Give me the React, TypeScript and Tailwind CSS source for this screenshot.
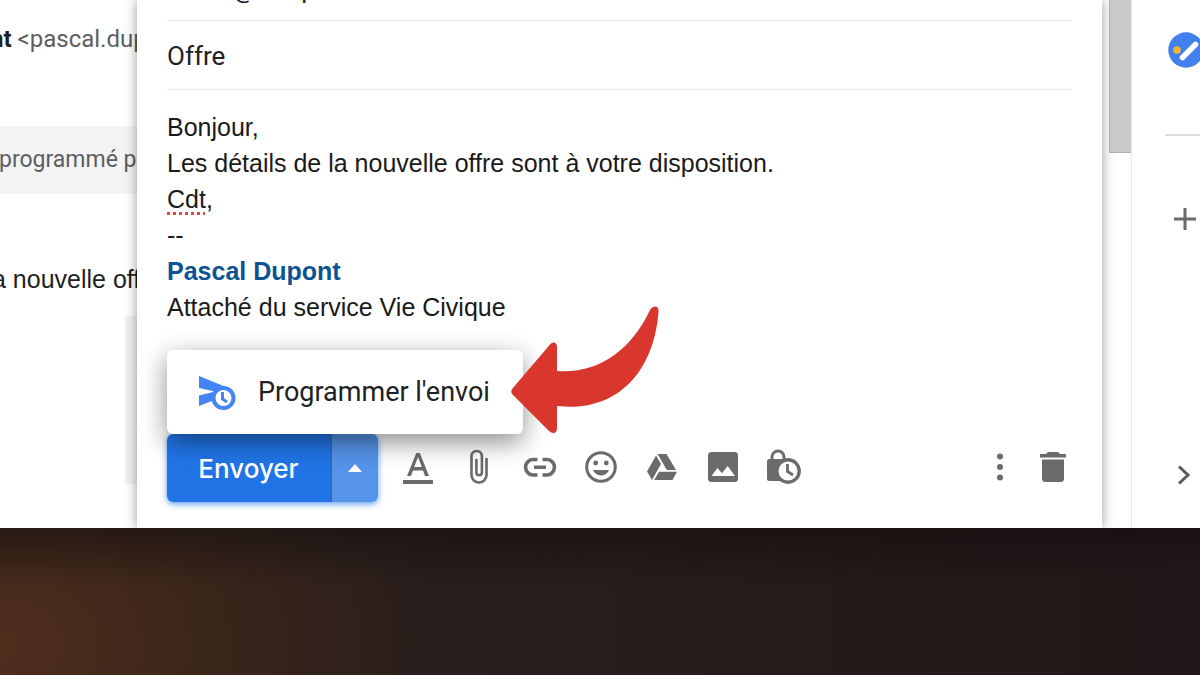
import { useState } from "react";
import type { ReactNode } from "react";

const ROBOTO = "font-['Roboto','Liberation_Sans',sans-serif]";

const ScheduleSendIcon = () => (
    <svg width="38" height="36" viewBox="0 0 38 36" fill="none" aria-hidden="true">
        <path d="M1 2L28 13L22 16L17 21L14 27L1 32V21.500L17 17.500L1 14Z" fill="#4285f4" />
        <circle cx="25.5" cy="24" r="10" fill="white" stroke="#4285f4" strokeWidth="4" />
        <path d="M24.5 18V25L29 28" stroke="#4285f4" strokeWidth="3" />
    </svg>
);

const FormatIcon = () => (
    <svg width="32" height="36" viewBox="0 0 32 36" fill="#6b6b6b" aria-hidden="true">
        <path d="M5 27L14.2 4H17.8L27 27H23L21 21.5H11L9 27ZM12.2 18H19.8L16 8Z" />
        <path d="M1 31H31V35H1Z" />
    </svg>
);

const AttachIcon = () => (
    <svg width="20" height="36" viewBox="0 0 20 36" fill="none" stroke="#6b6b6b" strokeWidth="2.6" aria-hidden="true">
        <path d="M17.5 9V26A7.5 7.5 0 0 1 2.5 26V7.200A5.200 5.200 0 0 1 12.9 7.200V23.5A2.75 2.75 0 0 1 7.4 23.5V10" />
    </svg>
);

const LinkIcon = () => (
    <svg width="36" height="36" viewBox="0 0 36 36" fill="none" stroke="#6b6b6b" strokeWidth="3.6" aria-hidden="true">
        <path d="M15.500 10.5H10.5A7.8 7.8 0 0 0 10.5 26H15.500M20.500 10.5H25.5A7.8 7.8 0 0 1 25.5 26H20.500M12 18.2H24" />
    </svg>
);

const EmojiIcon = () => (
    <svg width="34" height="36" viewBox="0 0 34 36" fill="#6b6b6b" aria-hidden="true">
        <circle cx="17" cy="18" r="14.3" fill="none" stroke="#6b6b6b" strokeWidth="3" />
        <circle cx="11.7" cy="14" r="2.4" />
        <circle cx="22.3" cy="14" r="2.4" />
        <path d="M9 21H25A8.6 8.6 0 0 1 9 21Z" />
    </svg>
);

const DriveIcon = () => (
    <svg width="32" height="36" viewBox="0 0 32 36" fill="#6b6b6b" aria-hidden="true">
        <path d="M10 6.5L15 15L6 31L1 22.5Z" />
        <path d="M11.5 5H20.5L30 21H20.8Z" />
        <path d="M13 22.8H31L26.5 31H8.2Z" />
    </svg>
);

const PhotoIcon = () => (
    <svg width="32" height="36" viewBox="0 0 32 36" aria-hidden="true">
        <rect x="1" y="3" width="30" height="30" rx="3.5" fill="#6b6b6b" />
        <path d="M4.5 27L10.5 19L15 24.3L20.7 17L28 27Z" fill="white" />
    </svg>
);

const ConfidentialIcon = () => (
    <svg width="36" height="36" viewBox="0 0 36 36" aria-hidden="true">
        <path d="M6 12V8A6 6 0 0 1 18 8V12" fill="none" stroke="#6b6b6b" strokeWidth="3" />
        <rect x="1" y="10" width="22" height="22" rx="2.5" fill="#6b6b6b" />
        <circle cx="22" cy="22" r="11.2" fill="white" stroke="#6b6b6b" strokeWidth="3.4" />
        <path d="M21.5 15V22.5L27 26" fill="none" stroke="#6b6b6b" strokeWidth="2.8" />
    </svg>
);

const MoreIcon = () => (
    <svg width="8" height="36" viewBox="0 0 8 36" fill="#6b6b6b" aria-hidden="true">
        <circle cx="4" cy="7.5" r="3" />
        <circle cx="4" cy="18" r="3" />
        <circle cx="4" cy="28.5" r="3" />
    </svg>
);

const TrashIcon = () => (
    <svg width="28" height="36" viewBox="0 0 28 36" fill="#6b6b6b" aria-hidden="true">
        <path d="M1 5H7L9 3H19L21 5H27V8.5H1Z" />
        <path d="M3 10.5H25V29.5A3.5 3.5 0 0 1 21.5 33H6.5A3.5 3.5 0 0 1 3 29.5Z" />
    </svg>
);

const TasksIcon = () => (
    <svg width="36" height="36" viewBox="0 0 36 36" aria-hidden="true">
        <circle cx="18" cy="18" r="17.7" fill="#4280ee" />
        <circle cx="9" cy="18" r="3.8" fill="#f5b52e" />
        <path d="M14.5 25.5L27.5 12.5" stroke="white" strokeWidth="5.5" strokeLinecap="round" />
    </svg>
);

const ArrowCallout = () => (
    <svg width="150" height="130" viewBox="0 0 150 130" fill="#d9362d" aria-hidden="true">
        <path d="M2.500 83.500L40 39.500Q42 37 44.500 37.500Q47 38.500 47 42V66C89 69 121 45 140 5Q142 1.500 145.500 1.500Q149 2 148.500 7C144 65 109 108 47 101V123Q47 127.500 44 128Q41.500 128.500 39 126L2.500 89.500Q0 86.500 2.500 83.500Z" />
    </svg>
);

const ToolButton = ({ label, children }: { label: string; children: ReactNode }) => (
    <button type="button" aria-label={label} className="flex w-9 shrink-0 justify-center">
        {children}
    </button>
);

const ThreadPane = () => (
    <section className="w-[137px] shrink-0 overflow-hidden whitespace-nowrap text-[#5b5e62]">
        <p className={`-ml-[10px] mt-[21px] h-[105px] text-2xl leading-9 ${ROBOTO}`}>
            <strong className="font-bold text-[#1f1f1f]">nt</strong> &lt;pascal.dupont
        </p>
        <p className={`-ml-px h-[68px] bg-[#f4f4f4] text-[23px] leading-[68px] ${ROBOTO}`}>programmé pour</p>
        <p className="-ml-2 mt-[67px] text-[25px] leading-9 text-[#1f1f1f]">a nouvelle offre</p>
        <div className="ml-[125px] mt-[19px] h-[168px] bg-[#f2f2f2]" />
    </section>
);

const Compose = () => {
    const [recipient, setRecipient] = useState("marie@tempo.fr");
    const [subject, setSubject] = useState("Offre");

    return (
        <form
            onSubmit={(e) => e.preventDefault()}
            className="relative z-10 min-w-0 flex-1 bg-white px-[30px] pb-[26px] shadow-[0_0_12px_rgba(0,0,0,0.4)]"
        >
            <div className={`-mt-8 text-[26px] text-[#202124] ${ROBOTO}`}>
                <input
                    aria-label="Destinataire"
                    value={recipient}
                    onChange={(e) => setRecipient(e.target.value)}
                    className="block h-[53px] w-full border-b border-[#e6e8ea] pb-[10px] outline-none"
                />
                <input
                    aria-label="Objet"
                    value={subject}
                    onChange={(e) => setSubject(e.target.value)}
                    className="block h-[69px] w-full border-b border-[#e6e8ea] pt-0.5 outline-none"
                />
            </div>

            <div
                role="textbox"
                aria-multiline="true"
                aria-label="Corps du message"
                className="mt-[19px] text-[25px] leading-9 text-[#1a1a1a]"
            >
                <p>Bonjour,</p>
                <p>Les détails de la nouvelle offre sont à votre disposition.</p>
                <p>
                    <span className="underline decoration-[#e8453c] decoration-dotted decoration-3 underline-offset-4">Cdt</span>,
                </p>
                <p>--</p>
                <p className="font-bold text-[#0b5394]">Pascal Dupont</p>
                <p>Attaché du service Vie Civique</p>
            </div>

            <div className="relative z-10 mt-[25px] w-[356px] rounded-md bg-white shadow-[0_8px_26px_rgba(0,0,0,0.45)]">
                <button
                    type="button"
                    className={`flex h-[84px] w-full items-center gap-[22px] whitespace-nowrap pl-[31px] text-[27px] text-[#202124] ${ROBOTO}`}
                >
                    <ScheduleSendIcon />
                    Programmer l'envoi
                </button>
                {/* Callout pointing at the schedule entry */}
                <div className="pointer-events-none absolute left-[343px] top-[-45px]">
                    <ArrowCallout />
                </div>
            </div>

            <div className="flex items-center">
                <div className="flex h-[68px] w-[211px] shrink-0 overflow-hidden rounded-md shadow-[0_2px_6px_rgba(26,115,232,0.7)]">
                    <button
                        type="submit"
                        className="flex-1 border-r-2 border-[#2b6bc9] bg-[#2174e6] font-['Inter','Liberation_Sans',sans-serif] text-[26px] font-medium text-white"
                    >
                        Envoyer
                    </button>
                    <button type="button" aria-label="Autres options d'envoi" className="flex w-[46px] items-center justify-center bg-[#5594e9]">
                        <svg width="14" height="8" viewBox="0 0 14 8" fill="white" aria-hidden="true">
                            <path d="M0 8L7 0L14 8Z" />
                        </svg>
                    </button>
                </div>
                <div className="mb-0.5 ml-[22px] flex gap-[25px]">
                    <ToolButton label="Options de mise en forme"><FormatIcon /></ToolButton>
                    <ToolButton label="Joindre des fichiers"><AttachIcon /></ToolButton>
                    <ToolButton label="Insérer un lien"><LinkIcon /></ToolButton>
                    <ToolButton label="Insérer un emoji"><EmojiIcon /></ToolButton>
                    <ToolButton label="Insérer depuis Drive"><DriveIcon /></ToolButton>
                    <ToolButton label="Insérer une photo"><PhotoIcon /></ToolButton>
                    <ToolButton label="Mode confidentiel"><ConfidentialIcon /></ToolButton>
                </div>
                <div className="mb-0.5 ml-auto flex gap-[17px] pr-px">
                    <ToolButton label="Plus d'options"><MoreIcon /></ToolButton>
                    <ToolButton label="Supprimer le brouillon"><TrashIcon /></ToolButton>
                </div>
            </div>
        </form>
    );
};

const SidePanel = () => (
    <aside className="flex w-[69px] shrink-0 flex-col overflow-hidden border-l border-[#e4ebee] pt-8">
        <button type="button" aria-label="Tasks" className="ml-9 w-9">
            <TasksIcon />
        </button>
        <hr className="ml-[33px] mt-[66px] border-t-2 border-[#dcdcdc]" />
        <button type="button" aria-label="Installer des modules" className="ml-[41px] mt-[71px] w-6">
            <svg width="24" height="24" viewBox="0 0 24 24" stroke="#6b6b6b" strokeWidth="3" aria-hidden="true">
                <path d="M12 1V23M1 12H23" />
            </svg>
        </button>
        <button type="button" aria-label="Masquer le panneau" className="mb-[42px] ml-[44px] mt-auto w-4">
            <svg width="16" height="22" viewBox="0 0 16 22" fill="none" stroke="#5a5a5a" strokeWidth="3" aria-hidden="true">
                <path d="M3 2.500L12 11L3 19.500" />
            </svg>
        </button>
    </aside>
);

export default function App() {
    return (
        <div className="flex min-h-screen flex-col bg-[#241a18] font-['Liberation_Sans',Arial,sans-serif]">
            <main className="flex overflow-hidden bg-white">
                <ThreadPane />
                <Compose />
                <div className="w-[29px] shrink-0 pl-[7px]">
                    <div className="relative z-20 h-[153px] border-b border-l border-[#b0b0b0] bg-[#c9c9c9]" />
                </div>
                <SidePanel />
            </main>
            {/* Desktop wallpaper */}
            <div className="flex-1 bg-[linear-gradient(to_bottom,rgba(16,12,12,0.5),transparent_40%),radial-gradient(ellipse_36%_220%_at_0%_80%,#502e1e_0%,#3c261a_45%,rgba(44,31,28,0)_100%),linear-gradient(to_right,#2b1f1c,#291e1c_45%,#231a19_75%,#221819)]" />
        </div>
    );
}
